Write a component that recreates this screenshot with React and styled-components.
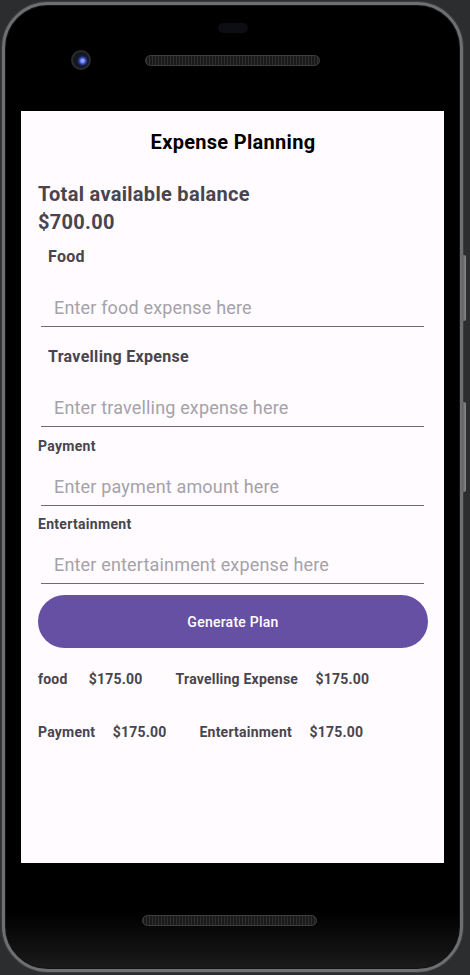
import React from "react";
import styled, { createGlobalStyle } from "styled-components";

const Global = createGlobalStyle`
  html, body { margin: 0; padding: 0; background: #2c2d2f; }
  body { font-family: Roboto, "Noto Sans", sans-serif; }
  * { box-sizing: border-box; }
`;

const Stage = styled.div`
  width: 470px;
  height: 975px;
  padding: 2px 0 0 2px;
  background: #2c2d2f;
`;

const Phone = styled.div`
  position: relative;
  width: 461px;
  height: 970px;
  border-radius: 46px;
  border: 3px solid #6e6f71;
  background: linear-gradient(to bottom, #000 0%, #000 94%, #161616 99%, #1c1c1c 100%);
  box-shadow: inset 0 0 0 1px #141414, 0 0 0 1px #3b3c3e;
  padding: 0 16px;
  display: flex;
  flex-direction: column;
`;

const SideButton = styled.div`
  position: absolute;
  right: -6px;
  width: 4px;
  border-radius: 0 2px 2px 0;
  background: linear-gradient(to right, #5d5d5f, #8a8a8c);
`;

const TopBezel = styled.div`
  height: 106px;
  display: flex;
  flex-direction: column;
  align-items: center;
`;

const Pill = styled.div`
  margin-top: 18px;
  width: 30px;
  height: 10px;
  border-radius: 5px;
  background: #0d0e13;
`;

const SensorRow = styled.div`
  margin-top: 17px;
  width: 100%;
  display: grid;
  grid-template-columns: 1fr auto 1fr;
  align-items: center;
`;

const Camera = styled.div`
  margin-left: 50px;
  width: 20px;
  height: 20px;
  border-radius: 50%;
  background: radial-gradient(circle at 60% 55%, #8aa0ff 0 1.5px, #3b4fc4 3px, #141a3a 5px, #16171b 7px);
  border: 2px solid #2a2b30;
`;

const Grille = styled.div`
  width: 175px;
  height: 11px;
  border-radius: 6px;
  border: 1px solid #3e3e3e;
  background-color: #1d1d1d;
  background-image: repeating-linear-gradient(90deg, #2f2f2f 0 1px, #1a1a1a 1px 3px);
`;

const Screen = styled.main`
  width: 423px;
  height: 752px;
  background: #fffbfe;
  padding: 0 16px 0 17px;
  display: flex;
  flex-direction: column;
`;

const Title = styled.h1`
  margin: 19px 0 0;
  font-size: 20px;
  line-height: 24px;
  font-weight: 700;
  letter-spacing: 0.3px;
  color: #000;
  text-align: center;
`;

const Balance = styled.div`
  margin-top: 26px;
  font-size: 20px;
  line-height: 28px;
  font-weight: 700;
  letter-spacing: 0.3px;
  color: #48454e;
`;

const FieldLabel = styled.label`
  display: block;
  margin-top: ${(p) => p.$top}px;
  padding: ${(p) => (p.$large ? "10px" : "0")};
  font-size: ${(p) => (p.$large ? 16 : 14)}px;
  line-height: 20px;
  font-weight: 700;
  letter-spacing: 0.3px;
  color: #48454e;
`;

const Field = styled.input`
  display: block;
  width: 383px;
  height: 50px;
  margin: 0 0 0 3px;
  padding: 19px 13px 8px;
  border: none;
  border-bottom: 1px solid #6f6b74;
  background: transparent;
  font-family: Roboto, sans-serif;
  font-size: 18px;
  line-height: 22px;
  letter-spacing: 0.17px;
  color: #1c1b1f;
  outline: none;
  &::placeholder { color: #a5a2a9; }
`;

const PlanButton = styled.button`
  margin-top: 11px;
  width: 390px;
  height: 53px;
  border: none;
  border-radius: 27px;
  background: #6650a4;
  color: #fff;
  font-family: Roboto, sans-serif;
  font-size: 14px;
  font-weight: 500;
  letter-spacing: 0.25px;
`;

const ResultRow = styled.div`
  margin-top: ${(p) => p.$top}px;
  display: flex;
  gap: 33px;
  font-size: 14px;
  line-height: 20px;
  font-weight: 700;
  letter-spacing: 0.22px;
  color: #48454e;
`;

const Pair = styled.div`
  display: flex;
  gap: 17.5px;
`;

const BottomBezel = styled.div`
  height: 106px;
  display: flex;
  flex-direction: column;
`;

const BottomGrille = styled(Grille)`
  margin: 52px 0 0 121px;
`;

const fields = [
  { label: "Food", ph: "Enter food expense here", large: true, top: 1 },
  { label: "Travelling Expense", ph: "Enter travelling expense here", large: true, top: 10 },
  { label: "Payment", ph: "Enter payment amount here", large: false, top: 9 },
  { label: "Entertainment", ph: "Enter entertainment expense here", large: false, top: 8 },
];

const results = [
  [["food\u00a0", "$175.00"], ["Travelling Expense", "$175.00"]],
  [["Payment", "$175.00"], ["Entertainment", "$175.00"]],
];

export default function App() {
  return (
    <>
      <Global />
      <Stage>
        <Phone>
          <SideButton style={{ top: 250, height: 66 }} />
          <SideButton style={{ top: 397, height: 90 }} />
          <TopBezel>
            <Pill />
            <SensorRow>
              <Camera />
              <Grille />
              <div />
            </SensorRow>
          </TopBezel>
          <Screen>
            <Title>Expense Planning</Title>
            <Balance>
              Total available balance
              <br />
              $700.00
            </Balance>
            {fields.map((f) => (
              <React.Fragment key={f.label}>
                <FieldLabel $large={f.large} $top={f.top}>
                  {f.label}
                </FieldLabel>
                <Field placeholder={f.ph} />
              </React.Fragment>
            ))}
            <PlanButton>Generate Plan</PlanButton>
            {results.map((row, i) => (
              <ResultRow key={i} $top={i === 0 ? 21 : 33}>
                {row.map(([name, val]) => (
                  <Pair key={name}>
                    <span>{name}</span>
                    <span>{val}</span>
                  </Pair>
                ))}
              </ResultRow>
            ))}
          </Screen>
          <BottomBezel>
            <BottomGrille />
          </BottomBezel>
        </Phone>
      </Stage>
    </>
  );
}
